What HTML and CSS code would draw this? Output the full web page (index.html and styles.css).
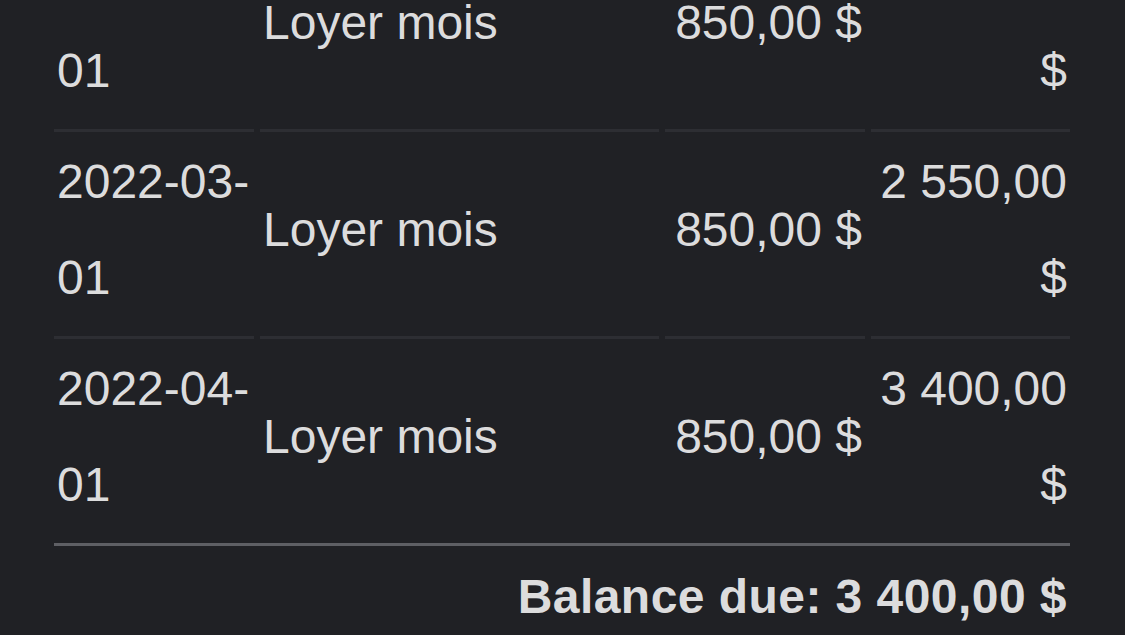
FILE: index.html
```html
<!DOCTYPE html>
<html lang="fr">
<head>
<meta charset="utf-8">
<title>Relevé de loyer</title>
<link rel="stylesheet" href="styles.css">
</head>
<body>
<main class="page">
  <table class="ledger">
    <colgroup>
      <col class="c-date">
      <col class="c-desc">
      <col class="c-amt">
      <col class="c-bal">
    </colgroup>
    <tbody>
      <tr>
        <td class="date">2022-02-<wbr>01</td>
        <td class="desc">Loyer mois</td>
        <td class="num">850,00 $</td>
        <td class="num">1&nbsp;700,00 $</td>
      </tr>
      <tr>
        <td class="date">2022-03-<wbr>01</td>
        <td class="desc">Loyer mois</td>
        <td class="num">850,00 $</td>
        <td class="num">2&nbsp;550,00 $</td>
      </tr>
      <tr class="last">
        <td class="date">2022-04-<wbr>01</td>
        <td class="desc">Loyer mois</td>
        <td class="num">850,00 $</td>
        <td class="num">3&nbsp;400,00 $</td>
      </tr>
    </tbody>
  </table>
  <div class="balance">Balance due: 3&nbsp;400,00&nbsp;$</div>
</main>
</body>
</html>
```

FILE: styles.css
```css
html, body {
  margin: 0;
  padding: 0;
  background: #202125;
}

body {
  font-family: "Liberation Sans", Arial, sans-serif;
  color: #dcdcdd;
  font-size: 48px;
  line-height: 96px;
  overflow: hidden;
}

.page {
  padding: 0 49px 0 48px;
}

.ledger {
  width: 100%;
  table-layout: fixed;
  border-collapse: separate;
  border-spacing: 6px 0;
  margin-top: -75px;
}

.c-date { width: 200px; }
.c-desc { width: 399px; }
.c-amt  { width: 200px; }
.c-bal  { width: 199px; }

.ledger td {
  padding: 2px 3px 10px 3px;
  vertical-align: middle;
  border-bottom: 3px solid #2d2e33;
}

.ledger tr.last td {
  border-bottom: none;
}

.ledger td.num {
  text-align: right;
}

.ledger td.date,
.ledger td.desc {
  text-align: left;
}

.balance {
  margin: 0 6px;
  border-top: 3px solid #5e5f64;
  padding: 3px 3px 0 0;
  text-align: right;
  font-weight: bold;
  letter-spacing: 0.45px;
}
```
